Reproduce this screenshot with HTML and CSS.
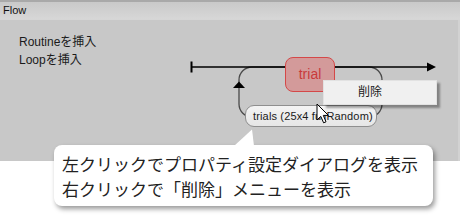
FILE: index.html
```html
<!DOCTYPE html>
<html lang="ja">
<head>
<meta charset="utf-8">
<link rel="stylesheet" href="styles.css">
</head>
<body>
<div class="app">
  <div class="titlebar">Flow</div>
  <div class="panel">
    <ul class="menu">
      <li>Routineを挿入</li>
      <li>Loopを挿入</li>
    </ul>
    <svg class="flow" width="460" height="141" viewBox="0 0 460 141">
      <rect x="239" y="47" width="143" height="50" rx="13" ry="13" fill="none" stroke="#4a4a4a" stroke-width="1.3"/>
      <line x1="191" y1="47" x2="430" y2="47" stroke="#000" stroke-width="1.6"/>
      <line x1="191.5" y1="41.5" x2="191.5" y2="52.5" stroke="#000" stroke-width="2"/>
      <polygon points="427,42.5 436,47 427,51.5" fill="#000"/>
      <polygon points="239,61.5 233,68 245,68" fill="#000"/>
    </svg>
    <div class="routine">trial</div>
    <div class="loop-label">trials (25x4 fullRandom)</div>
    <div class="ctx-menu">削除</div>
    <svg class="cursor" width="14" height="22" viewBox="0 0 14 22">
      <path d="M1 1 L1 17 L4.8 13.4 L7.6 19.8 L10 18.8 L7.3 12.4 L12.4 12.4 Z" fill="#fff" stroke="#000" stroke-width="1" stroke-linejoin="miter"/>
    </svg>
  </div>
  <div class="callout">
    <svg class="pointer" width="26" height="20" viewBox="0 0 26 20">
      <polygon points="2,18 20,1.5 22,18" fill="#fff"/>
    </svg>
    <p>左クリックでプロパティ設定ダイアログを表示</p>
    <p>右クリックで「削除」メニューを表示</p>
  </div>
</div>
</body>
</html>
```

FILE: styles.css
```css
html, body {
  margin: 0;
  padding: 0;
  background: #ffffff;
}
body {
  width: 460px;
  height: 220px;
  overflow: hidden;
  font-family: "Liberation Sans", "Noto Sans CJK JP", sans-serif;
}
.app {
  position: relative;
  width: 460px;
  height: 220px;
  display: flex;
  flex-direction: column;
}
.titlebar {
  box-sizing: border-box;
  height: 20px;
  border-top: 2px solid #a9a9a9;
  border-bottom: 1px solid #d6d6d6;
  background: linear-gradient(#c9c9c9, #d7d7d7);
  padding-left: 3px;
  font-size: 11px;
  line-height: 16px;
  color: #111;
}
.panel {
  position: relative;
  height: 141px;
  background: #c8c8c8;
  border-right: 2px solid #d2d2d2;
}
.menu {
  list-style: none;
  margin: 0;
  padding: 13px 0 0 19px;
  font-size: 12px;
  line-height: 18px;
  color: #1a1a1a;
}
.flow {
  position: absolute;
  left: 0;
  top: 0;
}
.routine {
  position: absolute;
  left: 285px;
  top: 37px;
  box-sizing: border-box;
  width: 50px;
  height: 35px;
  border: 1px solid #d44848;
  border-radius: 8px;
  background: #d39a9a;
  color: #c93a3a;
  font-size: 14px;
  line-height: 33px;
  text-align: center;
}
.loop-label {
  position: absolute;
  left: 245px;
  top: 85px;
  box-sizing: border-box;
  width: 132px;
  height: 22px;
  border: 1px solid #8f8f8f;
  border-radius: 9px;
  background: linear-gradient(#f4f4f4, #e6e6e6);
  padding-left: 7px;
  font-size: 11px;
  letter-spacing: 0.15px;
  line-height: 20px;
  color: #1a1a1a;
  white-space: nowrap;
}
.ctx-menu {
  position: absolute;
  left: 323px;
  top: 60px;
  box-sizing: border-box;
  width: 114px;
  height: 25px;
  background: #f0f0f0;
  border: 1px solid #e2e2e2;
  box-shadow: 3px 3px 2px rgba(0, 0, 0, 0.35);
  padding-left: 34px;
  font-size: 12px;
  line-height: 23px;
  color: #1a1a1a;
}
.cursor {
  position: absolute;
  left: 316px;
  top: 83px;
}
.callout {
  position: absolute;
  left: 54px;
  top: 145px;
  box-sizing: border-box;
  width: 379px;
  height: 61px;
  background: #ffffff;
  border-radius: 8px;
  box-shadow: 2px 3px 5px rgba(0, 0, 0, 0.4);
  padding: 6px 0 0 8px;
  font-family: "Noto Sans CJK JP", sans-serif;
  font-size: 17px;
  line-height: 25px;
  color: #222;
}
.callout p {
  margin: 0;
  white-space: nowrap;
}
.pointer {
  position: absolute;
  left: 178px;
  top: -17px;
}
```
